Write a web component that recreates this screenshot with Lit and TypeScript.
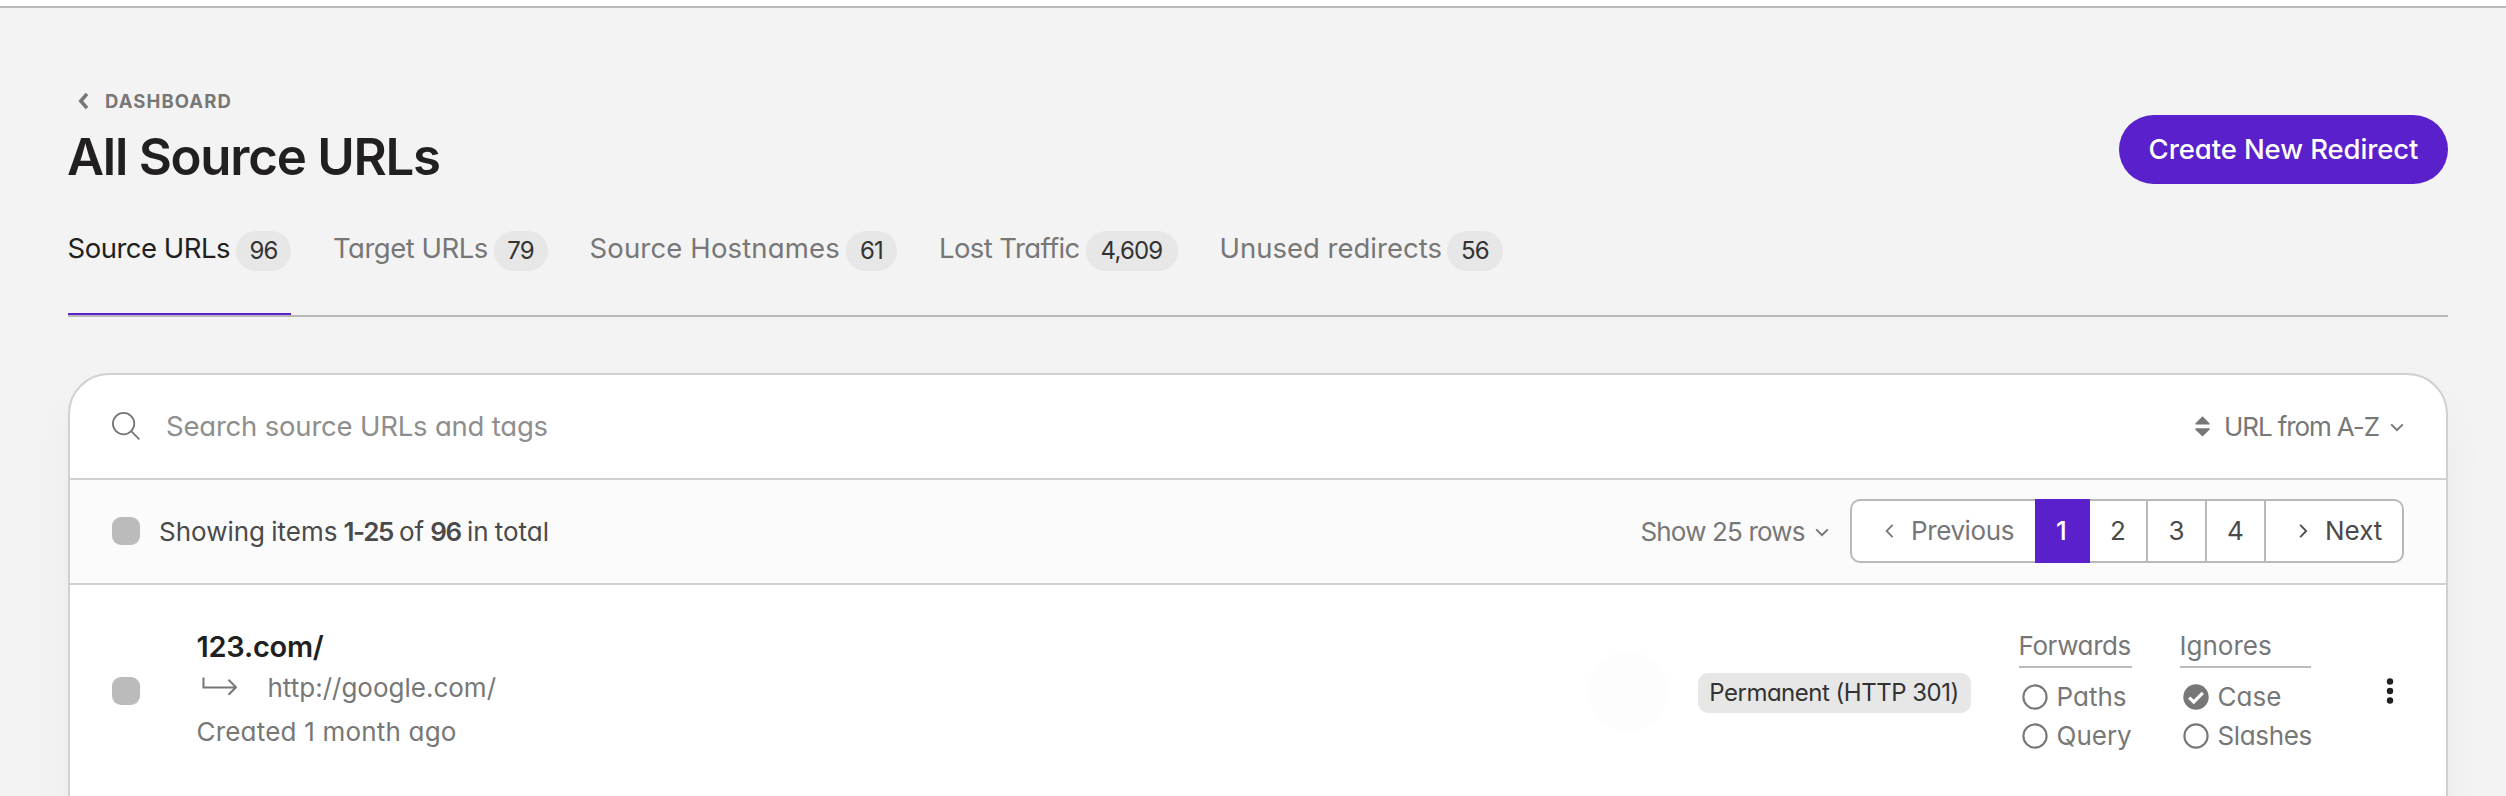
import { LitElement, html, css, svg } from "lit";
import { customElement, property, state } from "lit/decorators.js";
import { classMap } from "lit/directives/class-map.js";

interface Tab {
  label: string;
  count: string;
  width: number;
  badge: number;
  tracking: number;
}

const TABS: Tab[] = [
  { label: "Source URLs", count: "96", width: 223, badge: 55, tracking: -0.5 },
  { label: "Target URLs", count: "79", width: 214, badge: 54, tracking: -0.5 },
  { label: "Source Hostnames", count: "61", width: 307, badge: 51, tracking: 0.15 },
  { label: "Lost Traffic", count: "4,609", width: 238, badge: 92, tracking: -0.6 },
  { label: "Unused redirects", count: "56", width: 283, badge: 56, tracking: 0 },
];

const chevronDown = html`<svg class="chev-down" width="14" height="9" viewBox="0 0 14 9">
  <path d="M1.2 1.4 7 7.2l5.8-5.8" fill="none" stroke="currentColor" stroke-width="2" />
</svg>`;

@customElement("option-flag")
class OptionFlag extends LitElement {
  @property() label = "";
  @property({ type: Boolean }) checked = false;

  static styles = css`
    :host {
      display: flex;
      align-items: center;
      height: 39px;
      padding-left: 3.5px;
    }
    svg {
      flex: none;
      margin-right: 8.5px;
    }
  `;

  render() {
    return html`<svg width="26" height="26" viewBox="0 0 26 26">
        ${this.checked
          ? svg`<circle cx="13" cy="13" r="12.7" fill="#777" />
              <path d="M6.2 13.6 10.8 18 19.8 8.9" fill="none" stroke="#fff" stroke-width="3.2" />`
          : svg`<circle cx="13" cy="13" r="11.6" fill="none" stroke="#777" stroke-width="2.1" />`}
      </svg>
      <span>${this.label}</span>`;
  }
}

@customElement("app-root")
export class AppRoot extends LitElement {
  @state() private activeTab = 0;
  @state() private page = 1;

  static styles = css`
    :host {
      display: block;
      box-sizing: border-box;
      height: 796px;
      overflow: hidden;
      background: #f3f3f3;
      color: #777;
      font-family: Inter, sans-serif;
      font-size: 26px;
      font-feature-settings: "cv11";
      white-space: nowrap;
    }
    svg {
      display: block;
      flex: none;
    }
    .topbar {
      height: 6px;
      background: #fff;
      border-bottom: 2px solid #b9b9b9;
    }
    main {
      padding: 80px 58px 0 68px;
    }
    header {
      display: flex;
      justify-content: space-between;
      align-items: flex-start;
    }
    .crumb {
      display: flex;
      align-items: center;
      gap: 16px;
      padding-left: 10px;
      height: 26px;
      font-size: 18.5px;
      font-weight: 700;
      letter-spacing: 1.1px;
    }
    h1 {
      margin: 12px 0 0 -1px;
      font-size: 51px;
      line-height: 61px;
      font-weight: 600;
      letter-spacing: -1.25px;
      color: #221f20;
    }
    .create {
      margin-top: 27px;
      box-sizing: border-box;
      width: 329px;
      height: 69px;
      padding: 0;
      border: 0;
      border-radius: 35px;
      background: #5a20cb;
      color: #fff;
      font: 500 27.5px / 69px Inter, sans-serif;
      font-feature-settings: inherit;
      letter-spacing: -0.1px;
    }
    .tabs {
      display: flex;
      gap: 42.5px;
      padding-top: 41px;
      border-bottom: 2px solid #b9b9b9;
    }
    .tab {
      box-sizing: border-box;
      display: flex;
      align-items: flex-start;
      justify-content: space-between;
      height: 87px;
      font-size: 27.5px;
      line-height: 40px;
      border-bottom: 2px solid transparent;
    }
    .tab.on {
      color: #221f20;
      border-bottom-color: #5a20cb;
    }
    .tab .label {
      margin-left: -0.5px;
    }
    .count {
      margin-top: 3px;
      height: 40px;
      border-radius: 20px;
      background: #e7e7e7;
      color: #333;
      font-size: 24px;
      letter-spacing: -0.8px;
      text-align: center;
    }
    .card {
      margin-top: 56px;
      min-height: 500px;
      border: 2px solid #d0d0d0;
      border-radius: 41px;
      background: #fff;
      box-shadow: 0 24px 48px rgba(0, 0, 0, 0.035);
      overflow: hidden;
    }
    .search,
    .bar {
      display: flex;
      align-items: center;
      height: 102px;
      padding: 0 42px 1px;
      border-bottom: 2px solid #d0d0d0;
    }
    .search .query {
      margin-left: 26px;
      flex: 1;
      font-size: 27.5px;
      letter-spacing: -0.2px;
      color: #8e8e8e;
    }
    .sort {
      display: flex;
      align-items: center;
    }
    .sort .by {
      width: 166px;
      padding-left: 14px;
      letter-spacing: -1.1px;
    }
    .bar {
      background: #fbfbfb;
    }
    .check {
      width: 28px;
      height: 28px;
      border-radius: 9px;
      background: #bbb;
    }
    .summary {
      margin-left: 19px;
      flex: 1;
      color: #4a4a4a;
      letter-spacing: 0;
      word-spacing: -1.2px;
    }
    .summary b {
      font-weight: 600;
      letter-spacing: -1.4px;
    }
    .rows {
      display: flex;
      align-items: center;
      margin-right: 21px;
    }
    .rows span {
      width: 174.5px;
      letter-spacing: -0.85px;
    }
    .chev-down {
      margin-top: 2px;
    }
    .pager {
      display: flex;
      height: 64px;
      color: #4a4a4a;
      line-height: 60px;
    }
    .pager > div {
      box-sizing: border-box;
      width: 59px;
      border: solid #b9b9b9;
      border-width: 2px 2px 2px 0;
      background: #fff;
      text-align: center;
    }
    .pager > .num.first {
      width: 58px;
    }
    .pager > .num.on {
      width: 55px;
      border-color: #5a20cb;
      background: #5a20cb;
      color: #fff;
      font-weight: 500;
    }
    .pager > .prev {
      display: flex;
      align-items: center;
      width: 185px;
      padding-left: 33px;
      gap: 17px;
      border-width: 2px 0 2px 2px;
      border-radius: 10px 0 0 10px;
      color: #777;
      letter-spacing: -0.4px;
    }
    .pager > .next {
      display: flex;
      align-items: center;
      width: 138px;
      padding-left: 33px;
      gap: 17px;
      border-radius: 0 10px 10px 0;
    }
    .item {
      display: flex;
      align-items: center;
      height: 212px;
      padding: 0 42px;
    }
    .urls {
      flex: 1;
      margin-left: 56.5px;
    }
    .source {
      font-size: 29px;
      line-height: 41px;
      font-weight: 600;
      letter-spacing: -0.25px;
      color: #221f20;
    }
    .target {
      display: flex;
      align-items: center;
      gap: 31px;
      padding-left: 5px;
      line-height: 41px;
    }
    .target svg {
      margin-top: -2px;
    }
    .created {
      line-height: 48px;
      letter-spacing: 0.2px;
    }
    .halo {
      width: 80px;
      height: 80px;
      margin-right: 30px;
      border-radius: 50%;
      background: #fdfdfd;
    }
    .status {
      width: 273px;
      height: 40px;
      margin: 4px 48px 0 0;
      border-radius: 10px;
      background: #e7e7e7;
      color: #333;
      font-size: 24px;
      line-height: 40px;
      letter-spacing: -0.5px;
      text-align: center;
    }
    .group {
      height: 130px;
    }
    .group h2 {
      margin: 0 0 9px;
      border-bottom: 2px solid #bbb;
      font-size: 26px;
      font-weight: 400;
      line-height: 40px;
    }
    .forwards {
      width: 113px;
      margin-right: 48px;
    }
    .forwards h2 {
      letter-spacing: -0.4px;
    }
    .ignores {
      width: 131px;
      margin-right: 75.5px;
    }
    .slashes {
      letter-spacing: -0.35px;
    }
    .dots {
      margin-right: 10px;
    }
  `;

  private renderTab(tab: Tab, i: number) {
    return html`<div
      class=${classMap({ tab: true, on: i === this.activeTab })}
      style="width:${tab.width}px"
      @click=${() => (this.activeTab = i)}
    >
      <span class="label" style="letter-spacing:${tab.tracking}px">${tab.label}</span>
      <span class="count" style="width:${tab.badge}px">${tab.count}</span>
    </div>`;
  }

  private renderPage(n: number) {
    return html`<div
      class=${classMap({ num: true, first: n === 2, on: n === this.page })}
      @click=${() => (this.page = n)}
    >${n}</div>`;
  }

  render() {
    return html`
      <div class="topbar"></div>
      <main>
        <header>
          <div>
            <div class="crumb">
              <svg width="11" height="18" viewBox="0 0 11 18">
                <path d="M9 1.8 2.8 9 9 16.2" fill="none" stroke="#777" stroke-width="3.6" />
              </svg>
              <span>DASHBOARD</span>
            </div>
            <h1>All Source URLs</h1>
          </div>
          <button class="create">Create New Redirect</button>
        </header>

        <nav class="tabs">${TABS.map((t, i) => this.renderTab(t, i))}</nav>

        <section class="card">
          <div class="search">
            <svg width="28" height="28" viewBox="0 0 28 28" fill="none" stroke="#777" stroke-width="1.8">
              <circle cx="11.6" cy="11.6" r="10.7" />
              <path d="M19.2 19.2 27.4 27.4" />
            </svg>
            <span class="query">Search source URLs and tags</span>
            <div class="sort">
              <svg width="15" height="21" viewBox="0 0 15 21" fill="#777">
                <path d="M7.5 0.2 14.7 7.4Q15 8.6 14 8.6H1Q0 8.6 0.3 7.4Z" />
                <path d="M7.5 20.6 14.7 13.6Q15 12.2 14 12.2H1Q0 12.2 0.3 13.6Z" />
              </svg>
              <span class="by">URL from A-Z</span>
              ${chevronDown}
            </div>
          </div>

          <div class="bar">
            <div class="check"></div>
            <span class="summary">Showing items <b>1-25</b> of <b>96</b> in total</span>
            <div class="rows"><span>Show 25 rows</span>${chevronDown}</div>
            <div class="pager">
              <div class="prev">
                <svg width="9" height="14" viewBox="0 0 9 14">
                  <path d="M7.6 0.8 1.6 7l6 6.2" fill="none" stroke="#777" stroke-width="1.8" />
                </svg>
                <span>Previous</span>
              </div>
              ${[1, 2, 3, 4].map((n) => this.renderPage(n))}
              <div class="next">
                <svg width="9" height="14" viewBox="0 0 9 14">
                  <path d="M1.2 0.8 7.2 7l-6 6.2" fill="none" stroke="#4a4a4a" stroke-width="1.8" />
                </svg>
                <span>Next</span>
              </div>
            </div>
          </div>

          <div class="item">
            <div class="check"></div>
            <div class="urls">
              <div class="source">123.com/</div>
              <div class="target">
                <svg width="35" height="20" viewBox="0 0 35 20" fill="none" stroke="#777" stroke-width="2">
                  <path d="M1.5 0.5V10.5H33.5M26.5 2.8 34 10.3 26.5 17.8" />
                </svg>
                <span>http://google.com/</span>
              </div>
              <div class="created">Created 1 month ago</div>
            </div>
            <div class="halo"></div>
            <div class="status">Permanent (HTTP 301)</div>
            <div class="group forwards">
              <h2>Forwards</h2>
              <option-flag label="Paths"></option-flag>
              <option-flag label="Query"></option-flag>
            </div>
            <div class="group ignores">
              <h2>Ignores</h2>
              <option-flag label="Case" checked></option-flag>
              <option-flag class="slashes" label="Slashes"></option-flag>
            </div>
            <svg class="dots" width="8" height="26" viewBox="0 0 8 26" fill="#221f20">
              <circle cx="4" cy="3.5" r="3.2" />
              <circle cx="4" cy="13" r="3.2" />
              <circle cx="4" cy="22.5" r="3.2" />
            </svg>
          </div>
        </section>
      </main>
    `;
  }
}
